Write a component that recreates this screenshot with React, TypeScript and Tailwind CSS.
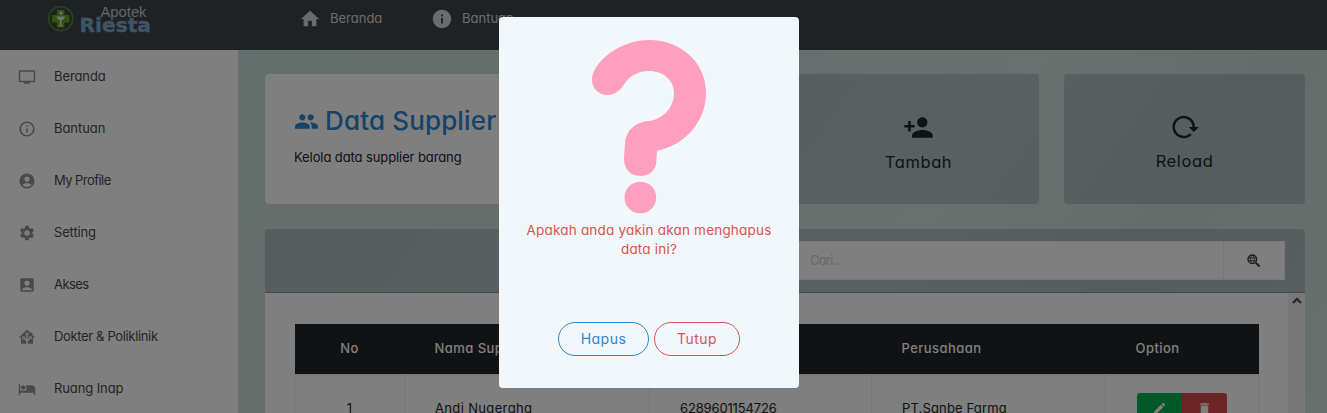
import type { ReactNode } from "react";
import {
  MdAccountBox,
  MdAccountCircle,
  MdDelete,
  MdEdit,
  MdGroup,
  MdHome,
  MdHotel,
  MdInfo,
  MdInfoOutline,
  MdPersonAdd,
  MdSettings,
  MdTv,
} from "react-icons/md";

function Glyph({ d, className }: { d: string; className: string }) {
  return (
    <svg viewBox="0 0 24 24" fill="currentColor" className={className}>
      <path d={d} />
    </svg>
  );
}

const houseTree =
  "M21.8,13H20V21H13V17.67L15.79,14.88L16.5,15C17.66,15 18.6,14.06 18.6,12.9C18.6,11.74 17.66,10.8 16.5,10.8A2.1,2.1 0 0,0 14.4,12.9L14.5,13.61L13,15.13V9.65C13.66,9.29 14.1,8.6 14.1,7.8A2.1,2.1 0 0,0 12,5.7A2.1,2.1 0 0,0 9.9,7.8C9.9,8.6 10.34,9.29 11,9.65V15.13L9.5,13.61L9.6,12.9A2.1,2.1 0 0,0 7.5,10.8A2.1,2.1 0 0,0 5.4,12.9A2.1,2.1 0 0,0 7.5,15L8.21,14.88L11,17.67V21H4V13H2.25C1.83,13 1.42,13 1.42,12.79C1.43,12.57 1.85,12.15 2.28,11.72L11,3C11.33,2.67 11.67,2.33 12,2.33C12.33,2.33 12.67,2.67 13,3L17,7V6H19V9L21.78,11.78C22.18,12.18 22.59,12.59 22.6,12.8C22.6,13 22.2,13 21.8,13M7.5,12A0.9,0.9 0 0,1 8.4,12.9A0.9,0.9 0 0,1 7.5,13.8A0.9,0.9 0 0,1 6.6,12.9A0.9,0.9 0 0,1 7.5,12M16.5,12C17,12 17.4,12.4 17.4,12.9C17.4,13.4 17,13.8 16.5,13.8A0.9,0.9 0 0,1 15.6,12.9A0.9,0.9 0 0,1 16.5,12M12,6.9C12.5,6.9 12.9,7.3 12.9,7.8C12.9,8.3 12.5,8.7 12,8.7C11.5,8.7 11.1,8.3 11.1,7.8C11.1,7.3 11.5,6.9 12,6.9Z";
const reload =
  "M2 12C2 16.97 6.03 21 11 21C13.39 21 15.68 20.06 17.4 18.4L15.9 16.9C14.63 18.25 12.86 19 11 19C4.76 19 1.64 11.46 6.05 7.05C10.46 2.64 18 5.77 18 12H15L19 16H19.1L23 12H20C20 7.03 15.97 3 11 3C6.03 3 2 7.03 2 12Z";

function Logo() {
  return (
    <svg viewBox="0 0 110 36" className="ml-[46px] h-9 w-[110px] shrink-0">
      <circle cx="14.700" cy="18.700" r="12" fill="none" stroke="#568a25" strokeWidth="1.700" />
      <path d="M11 10h7.400v5h5v7.600h-5v5H11v-5H6V15h5z" fill="#62a91c" />
      <path
        d="M10.500 16.500h8.500c-.5 2.800-2.200 3.400-3.600 3.700v4.600l2.200 1.400h-5.800l2.200-1.400v-4.600c-1.400-.3-3-1.200-3.500-3.700zM13 12.500c2-2 4-.5 3.500 1l-1.500 1.800"
        fill="#dce8d8"
      />
      <text x="54.500" y="16.500" fontSize="14.500" textLength="46" lengthAdjust="spacingAndGlyphs" fill="#c4c8cc" fontFamily="Liberation Sans, sans-serif">
        Apotek
      </text>
      <text x="33.500" y="32" fontSize="20" fontWeight="700" textLength="71.500" lengthAdjust="spacingAndGlyphs" fill="#7fa8c8" stroke="#7fa8c8" strokeWidth=".4" fontFamily="DejaVu Sans, sans-serif">
        Riesta
      </text>
    </svg>
  );
}

const menu: { label: string; icon: ReactNode; track: string }[] = [
  { label: "Beranda", icon: <MdTv className="size-[18px]" />, track: "tracking-[-0.1px]" },
  { label: "Bantuan", icon: <MdInfoOutline className="size-[18px]" />, track: "tracking-[-0.05px]" },
  { label: "My Profile", icon: <MdAccountCircle className="size-[18px]" />, track: "tracking-[-0.55px]" },
  { label: "Setting", icon: <MdSettings className="size-[18px]" />, track: "tracking-[-0.15px]" },
  { label: "Akses", icon: <MdAccountBox className="size-[18px]" />, track: "tracking-[-0.55px]" },
  { label: "Dokter & Poliklinik", icon: <Glyph d={houseTree} className="size-[18px]" />, track: "tracking-[-0.35px]" },
  { label: "Ruang Inap", icon: <MdHotel className="size-[18px]" />, track: "tracking-[-0.1px]" },
];

function Sidebar() {
  return (
    <aside className="w-[238px] shrink-0 bg-white">
      {menu.map((m) => (
        <div key={m.label} className="flex h-[52px] items-center pt-[2px] pl-[18px] text-[13px] text-[#4a4a4a]">
          <span className="w-9 pb-px text-[#929292]">{m.icon}</span>
          <span className={m.track}>{m.label}</span>
        </div>
      ))}
    </aside>
  );
}

function ActionCard({ icon, label }: { icon: ReactNode; label: string }) {
  return (
    <div className="flex flex-col items-center rounded-sm bg-[#6a788c]/30 pt-[38px] text-base text-[#212529]">
      {icon}
      <span className="mt-[7px] text-[16.5px] leading-6 tracking-[0.6px]">{label}</span>
    </div>
  );
}

function SupplierTable() {
  return (
    <table className="w-[964px] table-fixed border-collapse text-left text-[13px] text-[#212529]">
      <colgroup>
        <col className="w-[110px]" />
        <col className="w-[245px]" />
        <col className="w-[222px]" />
        <col className="w-[234px]" />
        <col className="w-[153px]" />
      </colgroup>
      <thead>
        <tr className="h-[50px] bg-[#212529] tracking-[0.45px] text-white">
          <th className="text-center font-medium">No</th>
          <th className="pl-[30px] font-medium">Nama Supplier</th>
          <th className="pl-[30px] font-medium">No Telepon</th>
          <th className="pl-[30px] font-medium">Perusahaan</th>
          <th className="pl-[30px] font-medium">Option</th>
        </tr>
      </thead>
      <tbody>
        <tr className="h-[70px]">
          <td className="border border-[#ececec] text-center">1</td>
          <td className="border border-[#ececec] pl-[30px] tracking-[0.35px]">Andi Nugeraha</td>
          <td className="border border-[#ececec] pl-[30px] tracking-[-0.15px]">6289601154726</td>
          <td className="border border-[#ececec] pl-[30px] tracking-[0.15px]">PT.Sanbe Farma</td>
          <td className="border border-[#ececec] pl-[31px]">
            <div className="-mt-[2px] flex h-[31px] w-[90px] overflow-hidden rounded-[3px] text-white">
              <span className="flex w-[45px] items-center justify-center bg-[#00b050]">
                <MdEdit className="size-[15px]" />
              </span>
              <span className="flex w-[45px] items-center justify-center bg-[#d9494f]">
                <MdDelete className="size-[15px]" />
              </span>
            </div>
          </td>
        </tr>
      </tbody>
    </table>
  );
}

function Content() {
  return (
    <main className="min-w-0 grow bg-[linear-gradient(125deg,#c8dcd8_0%,#cbdcd3_22%,#cfdfdc_42%,#d2e2dd_60%,#cbd8d2_78%,#cfe0da_100%)] pt-6 pr-[22px] pl-[27px]">
      <div className="grid h-[130px] grid-cols-[1fr_241px_241px] gap-[25px]">
        <section className="rounded-sm bg-white pt-[29px] pl-[29px]">
          <h1 className="flex items-center text-[26px] leading-9 font-medium tracking-[0.15px] text-[#2e86d2]">
            <MdGroup className="mr-[6px] size-[25px]" />
            Data Supplier
          </h1>
          <p className="mt-[8px] text-[13px] leading-5 tracking-[-0.1px] text-[#212529]">Kelola data supplier barang</p>
        </section>
        <ActionCard icon={<MdPersonAdd className="size-[31px]" />} label="Tambah" />
        <ActionCard icon={<Glyph d={reload} className="size-[30px]" />} label="Reload" />
      </div>
      <section className="mt-[25px]">
        <div className="flex h-16 items-center justify-end rounded-t-sm border-b border-[#8d999b] bg-[#6a788c]/30 pr-5">
          <div className="flex h-[39px] w-[500px] border border-[#f2f2f2] bg-white text-[13px]">
            <span className="flex grow items-center pl-6 tracking-[-0.8px] text-[#d0d0d0]">Cari..</span>
            <span className="flex w-[61px] items-center justify-center border-l border-[#ececec] text-[#343a40]">
              <svg viewBox="0 0 24 24" fill="none" stroke="currentColor" className="size-4">
                <circle cx="9.500" cy="9.500" r="6.500" strokeWidth="2" />
                <ellipse cx="9.500" cy="9.500" rx="2.700" ry="6" strokeWidth="1.400" />
                <path d="M3.500 7.500h12M3.500 11.500h12" strokeWidth="1.400" />
                <path d="M14.500 14.500l6 6" strokeWidth="3" />
              </svg>
            </span>
          </div>
        </div>
        <div className="flex h-[400px] justify-between bg-white">
          <div className="pt-[31px] pl-[29px]">
            <SupplierTable />
          </div>
          <div className="flex w-[17px] justify-center bg-[#f1f1f1] pt-[4px]">
            <svg viewBox="0 0 10 7" className="h-[7px] w-[10px]" fill="none" stroke="#505050" strokeWidth="2.400">
              <path d="M1 6l4-4 4 4" />
            </svg>
          </div>
        </div>
      </section>
    </main>
  );
}

function ConfirmDialog() {
  return (
    <div className="absolute inset-0 flex items-start bg-black/50">
      <div className="mt-[17px] ml-[499px] flex h-[371px] w-[300px] flex-col items-center rounded bg-[#f1f7fa] pt-[21px]">
        <svg viewBox="300 114 354 531" className="h-[177px] w-[118px] shrink-0" fill="#ff9fbf">
          <path d="M306 240C306 190 385 120 477 120C575 120 648 190 648 278C648 365 585 435 501 452L499 485C497 512 477 528 450 528C422 528 402 508 402 475L405 430C408 390 438 365 478 363C520 358 552 322 552 280C552 240 520 213 477 213C438 213 415 232 400 256C390 274 372 285 352 285C326 285 306 265 306 240Z" />
          <circle cx="451" cy="592.500" r="47.500" />
        </svg>
        <p className="mt-[6px] w-[280px] text-center text-[13.500px] leading-[19px] tracking-[0.200px] text-[#d9534f]">
          Apakah anda yakin akan menghapus
          <br />
          data ini?
        </p>
        <div className="mt-[63px] flex gap-[5px] text-sm tracking-[0.500px]">
          <button className="h-[34px] w-[91px] rounded-full border border-[#2e86d2] text-[#2e86d2]">Hapus</button>
          <button className="h-[34px] w-[86px] rounded-full border border-[#d9534f] text-[#d9534f]">Tutup</button>
        </div>
      </div>
    </div>
  );
}

export default function App() {
  return (
    <div className="relative flex h-[413px] w-[1327px] flex-col overflow-hidden font-['Inter',sans-serif] [font-feature-settings:'cv11']">
      <header className="flex h-[50px] shrink-0 items-start bg-[#3c454b] text-[13px] text-[#d4d6d8]">
        <Logo />
        <nav className="flex pl-[143px]">
          <span className="flex h-[37px] w-[132px] items-center">
            <MdHome className="mr-[9px] size-[22px]" />
            Beranda
          </span>
          <span className="flex h-[37px] items-center">
            <MdInfo className="mr-[9px] size-[22px]" />
            Bantuan
          </span>
        </nav>
      </header>
      <div className="flex min-h-0 grow">
        <Sidebar />
        <Content />
      </div>
      <ConfirmDialog />
    </div>
  );
}
